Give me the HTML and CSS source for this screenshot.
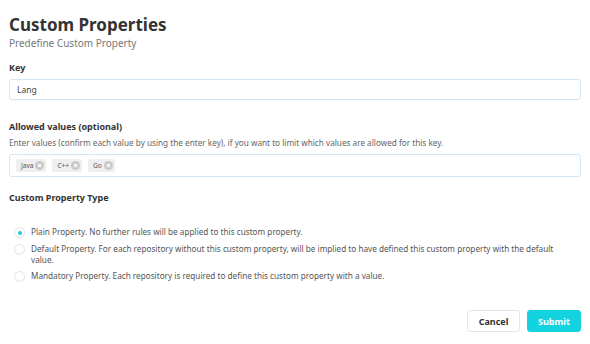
FILE: index.html
```html
<!DOCTYPE html>
<html>
<head>
<meta charset="utf-8">
<link rel="stylesheet" href="styles.css">
</head>
<body>
<div class="page">
  <h1 class="title">Custom Properties</h1>
  <div class="subtitle">Predefine Custom Property</div>

  <div class="field field-key">
    <div class="label">Key</div>
    <div class="input">Lang</div>
  </div>

  <div class="field field-values">
    <div class="label">Allowed values (optional)</div>
    <div class="help">Enter values (confirm each value by using the enter key), if you want to limit which values are allowed for this key.</div>
    <div class="input tags">
      <span class="tag">Java<span class="x"><svg viewBox="0 0 10 10" width="9" height="9"><circle cx="5" cy="5" r="5" fill="#c8c8c8"/><path d="M3.2 3.2L6.8 6.8M6.8 3.2L3.2 6.8" stroke="#fff" stroke-width="1.2"/></svg></span></span>
      <span class="tag">C++<span class="x"><svg viewBox="0 0 10 10" width="9" height="9"><circle cx="5" cy="5" r="5" fill="#c8c8c8"/><path d="M3.2 3.2L6.8 6.8M6.8 3.2L3.2 6.8" stroke="#fff" stroke-width="1.2"/></svg></span></span>
      <span class="tag">Go<span class="x"><svg viewBox="0 0 10 10" width="9" height="9"><circle cx="5" cy="5" r="5" fill="#c8c8c8"/><path d="M3.2 3.2L6.8 6.8M6.8 3.2L3.2 6.8" stroke="#fff" stroke-width="1.2"/></svg></span></span>
    </div>
  </div>

  <div class="field field-type">
    <div class="label">Custom Property Type</div>
    <div class="radios">
      <div class="radio-row">
        <span class="radio checked"></span>
        <span class="radio-text">Plain Property. No further rules will be applied to this custom property.</span>
      </div>
      <div class="radio-row">
        <span class="radio"></span>
        <span class="radio-text">Default Property. For each repository without this custom property, will be implied to have defined this custom property with the default value.</span>
      </div>
      <div class="radio-row">
        <span class="radio"></span>
        <span class="radio-text">Mandatory Property. Each repository is required to define this custom property with a value.</span>
      </div>
    </div>
  </div>

  <div class="actions">
    <button class="btn btn-cancel">Cancel</button>
    <button class="btn btn-submit">Submit</button>
  </div>
</div>
</body>
</html>
```

FILE: styles.css
```css
* { box-sizing: border-box; }
html, body { margin: 0; padding: 0; background: #fff; }
body {
  font-family: "Noto Sans", "Open Sans", sans-serif;
  color: #333;
}
.page {
  padding: 14px 9px 0 9px;
  display: flex;
  flex-direction: column;
}
.title {
  margin: 0;
  font-size: 17px;
  line-height: 22px;
  font-weight: 700;
  color: #333;
}
.subtitle {
  font-size: 10px;
  line-height: 13px;
  color: #777;
  margin-top: 1px;
}
.label {
  font-size: 9px;
  font-weight: 700;
  color: #333;
  line-height: 12px;
}
.field-key { margin-top: 12px; }
.field-key .label { margin-bottom: 5px; }
.input {
  border: 1px solid #cfe7f6;
  border-radius: 3px;
  height: 21px;
  padding: 0 7px;
  font-size: 8.5px;
  line-height: 19px;
  color: #444;
}
.field-values { margin-top: 21px; }
.help {
  font-size: 8.2px;
  color: #666;
  line-height: 12px;
  margin-top: 4px;
  margin-bottom: 5px;
}
.tags {
  height: 23px;
  display: flex;
  align-items: center;
  gap: 6px;
  padding: 0 6px;
}
.tag {
  background: #efefef;
  border-radius: 2px;
  height: 13px;
  padding: 0 2px 0 5px;
  display: inline-flex;
  align-items: center;
  font-size: 6.5px;
  color: #555;
  gap: 2px;
}
.x { display: inline-flex; }
.field-type { margin-top: 15px; }
.radios {
  margin-top: 22px;
  display: flex;
  flex-direction: column;
  gap: 5px;
}
.radio-row {
  display: flex;
  align-items: flex-start;
  gap: 6px;
  padding-left: 5px;
  padding-right: 22px;
}
.radio {
  flex: none;
  width: 11px;
  height: 11px;
  border-radius: 50%;
  border: 1px solid #e2e2e2;
  margin-top: 1px;
  position: relative;
  background: #fff;
}
.radio.checked::after {
  content: "";
  position: absolute;
  left: 2.5px;
  top: 2.5px;
  width: 4px;
  height: 4px;
  border-radius: 50%;
  background: #1fc8dc;
}
.radio-text {
  font-size: 8.2px;
  line-height: 11px;
  color: #555;
}
.actions {
  margin-top: 28px;
  display: flex;
  justify-content: flex-end;
  gap: 7px;
}
.btn {
  font-family: inherit;
  font-size: 9px;
  font-weight: 700;
  height: 22px;
  border-radius: 3px;
  padding: 0;
  cursor: pointer;
}
.btn-cancel {
  width: 53px;
  background: #fff;
  color: #333;
  border: 1px solid #e6e6e6;
}
.btn-submit {
  width: 54px;
  background: #13d3e0;
  color: #fff;
  border: 1px solid #13d3e0;
}
```
